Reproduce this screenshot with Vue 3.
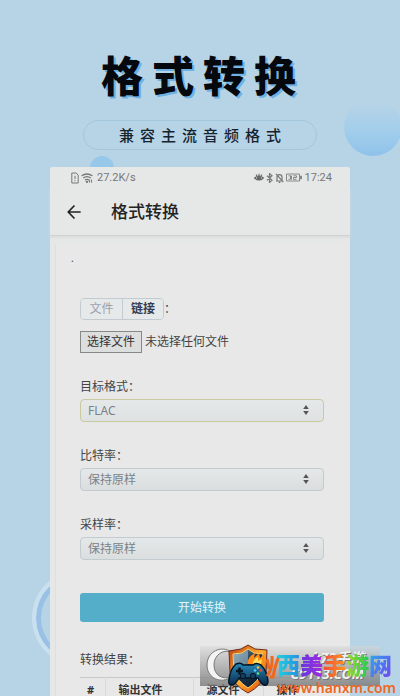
<script setup>
import { ref } from 'vue'

const source = ref('link')
const format = ref('FLAC')
const bitrate = ref('保持原样')
const sampleRate = ref('保持原样')
const fields = [
  { id: 'format', label: '目标格式：', model: format, options: ['FLAC', 'MP3', 'WAV'], active: true },
  { id: 'bitrate', label: '比特率：', model: bitrate, options: ['保持原样'], active: false },
  { id: 'rate', label: '采样率：', model: sampleRate, options: ['保持原样'], active: false },
]
</script>

<template>
  <main class="poster">
    <div class="orb orb-large"></div>
    <div class="orb orb-small"></div>
    <div class="ring"></div>

    <header class="hero">
      <h1>格式转换</h1>
      <p>兼容主流音频格式</p>
    </header>

    <section class="phone">
      <div class="status">
        <div class="status-group">
          <svg width="8" height="12" viewBox="0 0 8 12" fill="none" stroke="#777" stroke-width="1">
            <path d="M.8 1h4.4l2 2.2V11H.8zM4 3.8v3.4M4 8.2v1" />
          </svg>
          <svg width="12" height="12" viewBox="0 0 12 12" fill="none" stroke="#777" stroke-width="1.3">
            <path d="M.6 3.8Q6 .2 11.4 3.8M2.2 6Q6 3.2 9.8 6M4 8.1Q6 6.6 8 8.1" />
            <path d="M5 9.4h2L6 11zM8.6 7.6v3M10.6 7.6v3" stroke-width="1" />
          </svg>
          <span>27.2K/s</span>
        </div>
        <div class="status-group right">
          <svg width="10" height="10" viewBox="0 0 11 10" fill="none" stroke="#666" stroke-width="1.2">
            <path d="M.7 5Q5.5.6 10.3 5 5.5 9.4.7 5zM2.3 1.3l1 1.4M5.5.3v2M8.7 1.3l-1 1.4" />
            <circle cx="5.5" cy="5" r="1.7" fill="#666" />
          </svg>
          <svg width="7" height="10" viewBox="0 0 7 10" fill="none" stroke="#777" stroke-width="1.2">
            <path d="M1 2.7 6 7.2 3.5 9.4V.6L6 2.8 1 7.3" />
          </svg>
          <svg width="9" height="10" viewBox="0 0 9 10" fill="none" stroke="#777" stroke-width="1.2">
            <path d="M1 8h7M2 7.5V4Q2 1.7 4.5 1.7T7 4v3.5M3.7 9.3h1.6M1 .8l7.4 8.4" />
          </svg>
          <svg width="17" height="9" viewBox="0 0 17 9" fill="none" stroke="#888" stroke-width="1">
            <path d="M.5 1h13v7H.5zM2.5 2.8h2v3.5h-2M5.5 2.5v4M7.5 2.8h3v1.7h-3v1.9h3" />
            <path d="M15 2.8v3.4" stroke-width="2" />
          </svg>
          <span>17:24</span>
        </div>
      </div>

      <div class="titlebar">
        <button type="button" class="back" aria-label="返回">
          <svg width="14" height="14" viewBox="0 0 14 14" fill="none" stroke="#222" stroke-width="1.7" stroke-linecap="round" stroke-linejoin="round">
            <path d="M13 7H1.2M7 1 1.2 7 7 13" />
          </svg>
        </button>
        <h2>格式转换</h2>
      </div>

      <div class="card">
        <div class="dot">.</div>
        <div class="source">
          <div class="tabs">
            <button type="button" :class="{ on: source === 'file' }" @click="source = 'file'">文件</button>
            <button type="button" :class="{ on: source === 'link' }" @click="source = 'link'">链接</button>
          </div>
          <span>：</span>
        </div>

        <label class="file">
          <input type="file">
          <span class="file-button">选择文件</span>
          <span>未选择任何文件</span>
        </label>

        <div v-for="field in fields" :key="field.id" class="field">
          <label :for="field.id">{{ field.label }}</label>
          <div class="select" :class="{ active: field.active }">
            <select :id="field.id" v-model="field.model.value">
              <option v-for="option in field.options" :key="option">{{ option }}</option>
            </select>
            <svg class="caret" width="6" height="10" viewBox="0 0 6 10" fill="#555">
              <path d="M3 0 5.8 4H.2zM3 10 .2 6h5.6z" />
            </svg>
          </div>
        </div>

        <button type="button" class="submit">开始转换</button>

        <h3>转换结果：</h3>
        <table>
          <thead>
            <tr><th class="index">#</th><th class="output">输出文件</th><th class="origin">源文件</th><th>操作</th></tr>
          </thead>
        </table>
      </div>
    </section>

    <aside class="watermark">
      <div class="band">
        <svg class="crescent" width="34" height="36" viewBox="0 0 34 36">
          <path d="M28 5C19-2 4 4 4 18s15 19 24 12C19 33 11 28 11 18S20 2 28 5z" fill="#f4f4f4" stroke="#777" />
        </svg>
        <span>k73手游<br>C9113.COM</span>
      </div>
      <svg class="badge" width="44" height="50" viewBox="0 0 44 50">
        <defs>
          <linearGradient id="flame" x2="1" y2="1">
            <stop stop-color="#bd3f16" /><stop offset=".5" stop-color="#ffad2e" /><stop offset="1" stop-color="#df4109" />
          </linearGradient>
          <linearGradient id="steel" x2="1" y2="1">
            <stop stop-color="#7799ad" /><stop offset=".5" stop-color="#183149" /><stop offset="1" stop-color="#071521" />
          </linearGradient>
          <linearGradient id="pad" x2="0" y2="1">
            <stop stop-color="#278abb" /><stop offset="1" stop-color="#0b2949" />
          </linearGradient>
        </defs>
        <path d="M22 1 29 5l12 1-1 22Q37 41 22 49 7 41 4 28L3 7l12-2z" fill="url(#flame)" stroke="#6e2918" />
        <path d="M22 5 28 9l9 1-1 17Q33 37 22 44 11 37 8 27L7 10l9-1z" fill="url(#steel)" stroke="#ffd46b" />
        <path d="M22 6v14L8 26 7.500 10.500 16 9.500z" fill="#a9c4d0" opacity=".55" />
        <path d="M22 20Q21 13 29 9l-1 5 5-5 1 5 5-5-2 13z" fill="#ff8b14" />
        <path d="M27 21q-1-5 5-8v4l4-2-1 6z" fill="#ffe25a" />
        <path d="M10 20Q15 18 17 21h10q3-3 8 0 6 6 7 16 0 5-4 4-3-1-6-7H13q-4 7-7 7-4 0-3-5 1-11 7-16z" fill="url(#pad)" stroke="#041625" stroke-width="1.5" />
        <path d="M10 27h7M13.5 23.5v7" stroke="#071522" stroke-width="2.5" />
        <circle cx="17" cy="32" r="2.7" fill="#123d5f" stroke="#061725" />
        <circle cx="27" cy="32" r="2.7" fill="#123d5f" stroke="#061725" />
        <circle cx="32" cy="23.5" r="1.3" fill="#ffc339" /><circle cx="35" cy="26.5" r="1.3" fill="#ff4b2f" />
        <circle cx="29" cy="26.5" r="1.3" fill="#54c9f5" /><circle cx="32" cy="29.5" r="1.3" fill="#5be47c" />
      </svg>
      <svg class="fire" width="14" height="26" viewBox="0 0 14 26" fill="none" stroke="#ef6820" stroke-width="3">
        <path d="M1 6l2 10M1 23Q7 16 6 3M4 24h3Q9 12 13 3" />
      </svg>
      <strong class="brand"><i class="cyan">西</i><i class="purple">美</i><i class="orange">手</i><i class="green">游</i><i class="blue">网</i></strong>
      <a class="site" href="#">www.hanxm.com</a>
    </aside>
  </main>
</template>

<style>
body {
  margin: 0;
}
</style>

<style scoped>
* {
  box-sizing: border-box;
}
.poster {
  position: relative;
  height: 100vh;
  overflow: hidden;
  background: #b7d4e6;
  color: #444;
  font-family: "Noto Sans", "Noto Sans CJK SC", sans-serif;
  font-size: 12px;
  line-height: 20px;
}
h1, h2, h3, p {
  margin: 0;
}
button, select {
  font: inherit;
}
.orb {
  position: absolute;
  border-radius: 50%;
  background: linear-gradient(#b7d4e6 8%, #a3ceeb 55%, #8fc2ea);
}
.orb-large {
  top: 98px;
  right: -2px;
  width: 58px;
  height: 58px;
}
.orb-small {
  top: 156px;
  left: 90px;
  width: 24px;
  height: 24px;
  background: #97c8ea;
}
.ring {
  position: absolute;
  top: 570px;
  left: 32px;
  width: 96px;
  height: 96px;
  border: 4px solid #c9e0ef;
  border-radius: 50%;
  box-shadow: inset 0 0 0 5px #98c1e5;
}
.hero {
  position: relative;
  display: flex;
  flex-direction: column;
  align-items: center;
  gap: 16px;
  height: 167px;
  padding-top: 48px;
}
h1 {
  padding-left: 6px;
  color: #05080d;
  font-size: 42px;
  font-weight: 900;
  line-height: 56px;
  letter-spacing: 9px;
  text-shadow: 2px 2px #6eb1e3;
}
.hero p {
  width: 234px;
  padding-left: 6px;
  border: 1px solid #a3c5dc;
  border-radius: 15px;
  color: #15232e;
  font-size: 15px;
  font-weight: 500;
  line-height: 28px;
  letter-spacing: 6px;
  text-align: center;
}
.phone {
  position: relative;
  width: 75%;
  min-height: 600px;
  margin: 0 auto;
  background: #e6e7e7;
  border-radius: 2px 2px 0 0;
}
.status {
  display: flex;
  justify-content: space-between;
  height: 21px;
  padding: 0 18px 0 21px;
  color: #777;
  font-family: Roboto, sans-serif;
  font-size: 11px;
}
.status-group {
  display: flex;
  align-items: center;
  gap: 2px;
}
.status-group span {
  padding-left: 2px;
}
.right span {
  padding-left: 0;
}
.titlebar {
  display: flex;
  align-items: center;
  gap: 30px;
  height: 48px;
  padding: 0 17px;
  border-bottom: 1px solid #cfd1d2;
  box-shadow: 0 2px 2px #dcdddd;
}
.back {
  display: flex;
  padding: 0;
  border: 0;
  background: none;
}
h2 {
  color: #222;
  font-size: 17px;
  font-weight: 500;
}
.card {
  margin: 8px 5px 0;
  padding: 6px 21px 0 24px;
  border-left: 1px solid #dddfe2;
  background: #e8e8e8;
}
.dot {
  height: 48px;
  margin-left: -9px;
  line-height: 16px;
  font-size: 10px;
}
.source {
  display: flex;
  align-items: center;
}
.tabs {
  display: flex;
  border: 1px solid #c3cbd1;
  border-radius: 4px;
  overflow: hidden;
}
.tabs button {
  width: 41px;
  padding: 0;
  border: 0;
  background: #e6e9ea;
  color: #9ca0ad;
}
.tabs button + button {
  border-left: 1px solid #c3cbd1;
}
.tabs .on {
  color: #353b4c;
  font-weight: 700;
}
.file {
  position: relative;
  display: flex;
  align-items: center;
  gap: 3px;
  margin-top: 11px;
}
.file input {
  position: absolute;
  width: 61px;
  height: 22px;
  opacity: 0;
}
.file-button {
  padding: 0 6px;
  border: 1px solid #888;
  background: #dddede;
  color: #333;
}
.field {
  margin-top: 24px;
}
.field label {
  display: block;
  line-height: 20px;
}
.select {
  position: relative;
  margin-top: 2px;
}
.select select {
  display: block;
  width: 100%;
  height: 23px;
  padding: 0 7px;
  appearance: none;
  border: 1px solid #c1cbd0;
  border-radius: 4px;
  background: linear-gradient(#e4e8e9, #dadedf);
  color: #7b8288;
}
.select.active select {
  border-color: #c9c9a0;
  background: linear-gradient(#e5e8e8, #dfe2e2);
}
.caret {
  position: absolute;
  top: 6px;
  right: 15px;
  pointer-events: none;
}
.submit {
  display: block;
  width: 100%;
  height: 29px;
  margin-top: 33px;
  border: 0;
  border-radius: 3px;
  background: #54aeca;
  color: #e4f4fa;
}
h3 {
  margin-top: 28px;
  color: #444;
  font-size: 12px;
  font-weight: 400;
}
table {
  width: 100%;
  margin-top: 7px;
  border-top: 1px solid #c6c8ca;
  border-collapse: collapse;
  table-layout: fixed;
}
th {
  padding: 2px 0 2px 13px;
  border-left: 1px solid #d7d9db;
  color: #333;
  font-size: 11px;
  font-weight: 700;
  text-align: left;
}
.index {
  width: 25px;
  padding-left: 7px;
  border-left: 0;
}
.output {
  width: 88px;
}
.origin {
  width: 70px;
}
.watermark {
  position: absolute;
  right: 0;
  bottom: 0;
  width: 200px;
  height: 56px;
}
.band {
  position: absolute;
  top: 6px;
  right: 20px;
  width: 180px;
  height: 40px;
  background: linear-gradient(#d8d8d888, #777777cc);
}
.crescent {
  position: absolute;
  top: 1px;
  left: 3px;
}
.band span {
  position: absolute;
  top: 4px;
  right: 16px;
  color: #f0f0f0;
  font: italic 700 14px/16px "Noto Sans", "Noto Sans CJK SC", sans-serif;
  text-align: right;
  text-shadow: 1px 1px #777;
}
.badge {
  position: absolute;
  top: 4px;
  left: 26px;
}
.fire {
  position: absolute;
  top: 13px;
  left: 66px;
}
.brand {
  position: absolute;
  top: 10px;
  right: 8px;
  font-size: 23px;
  font-weight: 900;
  line-height: 30px;
  white-space: nowrap;
}
.brand i {
  display: inline-block;
  background-clip: text;
  color: transparent;
  font-style: normal;
}
.brand .cyan { background-image: linear-gradient(90deg, #20d0e0, #258fdf); }
.brand .purple { background-image: linear-gradient(90deg, #6038df, #a62bdf); }
.brand .orange { background-image: linear-gradient(90deg, #f34c38, #ff971c); }
.brand .green { background-image: linear-gradient(90deg, #a5d829, #20cb57); }
.brand .blue { background-image: linear-gradient(120deg, #22b4ee, #793ef0); }
.site {
  position: absolute;
  right: 4px;
  bottom: -2px;
  color: #ee6722;
  font-size: 14px;
  font-weight: 600;
  line-height: 20px;
  text-decoration: none;
}
</style>
